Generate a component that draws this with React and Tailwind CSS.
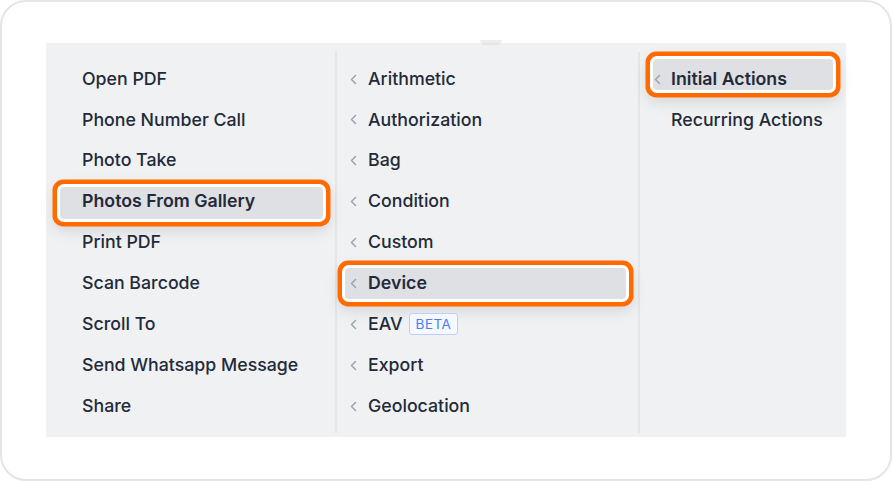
import React from "react";

const Chevron = ({ hidden }) => (
  <svg
    width="9"
    height="13"
    viewBox="0 0 9 13"
    className={hidden ? "invisible shrink-0" : "shrink-0"}
    fill="none"
  >
    <path d="M6.5 2.5 L2.5 6.5 L6.5 10.5" stroke="#9ca3af" strokeWidth="1.5" strokeLinecap="round" strokeLinejoin="round" />
  </svg>
);

const ring =
  "shadow-[0_0_0_3px_#ffffff,0_0_0_7.5px_#ff6b00,0_6px_14px_7px_rgba(0,0,0,0.10)]";

const col1 = [
  "Open PDF",
  "Phone Number Call",
  "Photo Take",
  "Photos From Gallery",
  "Print PDF",
  "Scan Barcode",
  "Scroll To",
  "Send Whatsapp Message",
  "Share",
];

const col2 = [
  "Arithmetic",
  "Authorization",
  "Bag",
  "Condition",
  "Custom",
  "Device",
  "EAV",
  "Export",
  "Geolocation",
];

export default function App() {
  return (
    <div
      className="w-[892px] h-[481px] bg-white"
      style={{ fontFamily: "Inter, 'Noto Sans', sans-serif" }}
    >
      <div className="h-full border-2 border-[#e3e5e9] rounded-[26px] pt-[41px] pl-[44px]">
        <div className="relative flex h-[394px] w-[800px] bg-[#f0f1f3]">
          {/* column 1 */}
          <div className="w-[289px] pt-[20px] flex flex-col gap-[8.875px]">
            {col1.map((t) => {
              const hl = t === "Photos From Gallery";
              return (
                <div key={t} className="relative h-[32px] flex items-center pl-[36px]">
                  {hl && (
                    <div
                      className={`absolute left-[14px] right-[12px] top-[1px] h-[32px] rounded-[4px] bg-[#dfe0e3] ${ring}`}
                    />
                  )}
                  <span
                    className={`relative text-[17.75px] text-[#232a39] ${hl ? "font-semibold" : "font-medium"}`}
                  >
                    {t}
                  </span>
                </div>
              );
            })}
          </div>
          <div className="w-[2px] bg-[#e4e6e9] mt-[9px] mb-[4px]" />
          {/* column 2 */}
          <div className="w-[301px] pt-[20px] flex flex-col gap-[8.875px]">
            {col2.map((t) => {
              const hl = t === "Device";
              return (
                <div key={t} className="relative h-[32px] flex items-center pl-[12px] gap-[10px]">
                  {hl && (
                    <div
                      className={`absolute left-[8px] right-[12px] top-[1px] h-[31px] rounded-[4px] bg-[#dfe0e3] ${ring}`}
                    />
                  )}
                  <span className="relative flex">
                    <Chevron />
                  </span>
                  <span
                    className={`relative text-[17.75px] text-[#232a39] ${hl ? "font-semibold" : "font-medium"}`}
                  >
                    {t}
                  </span>
                  {t === "EAV" && (
                    <span className="relative ml-[-4px] h-[22px] px-[6px] flex items-center rounded-[3px] border border-[#bcd0fb] bg-[#f5f8ff] text-[13.5px] font-normal tracking-[0.5px] text-[#4a7ef2]">
                      BETA
                    </span>
                  )}
                </div>
              );
            })}
          </div>
          <div className="w-[2px] bg-[#e4e6e9] mt-[9px] mb-[4px]" />
          {/* column 3 */}
          <div className="flex-1 pt-[20px] flex flex-col gap-[8.875px]">
            {["Initial Actions", "Recurring Actions"].map((t) => {
              const hl = t === "Initial Actions";
              return (
                <div key={t} className="relative h-[32px] flex items-center pl-[13px] gap-[9px]">
                  {hl && (
                    <div
                      className={`absolute left-[13px] right-[13px] top-[-4px] h-[31px] rounded-[4px] bg-[#dfe0e3] ${ring}`}
                    />
                  )}
                  <span className="relative flex">
                    <Chevron hidden={!hl} />
                  </span>
                  <span
                    className={`relative text-[17.75px] text-[#232a39] ${hl ? "font-semibold" : "font-medium"}`}
                  >
                    {t}
                  </span>
                </div>
              );
            })}
          </div>
          <div className="absolute top-[-3px] left-[434px] w-[22px] h-[5px] rounded-b-full bg-[#d9dbdf] opacity-50" />
        </div>
      </div>
    </div>
  );
}
